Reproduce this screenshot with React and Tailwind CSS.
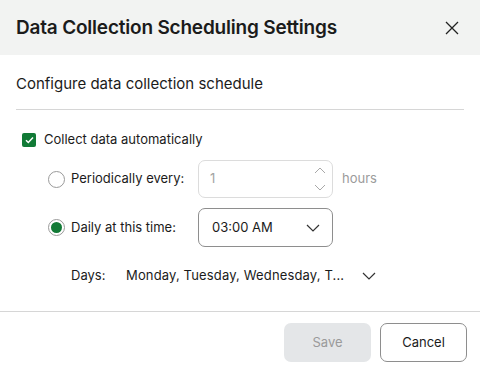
import React from 'react'

function Radio({ checked }) {
  return (
    <span className="w-[17px] h-[17px] rounded-full border border-[#9a9a9a] bg-white flex items-center justify-center">
      {checked && <span className="w-[11px] h-[11px] rounded-full bg-[#127a36]" />}
    </span>
  )
}

function Chevron({ className }) {
  return (
    <svg className={className} width="14" height="8" viewBox="0 0 14 8" fill="none">
      <path d="M1 1l6 6 6-6" stroke="#333" strokeWidth="1.2" />
    </svg>
  )
}

export default function App() {
  return (
    <div className="w-[480px] h-[375px] bg-white flex flex-col text-[#1b1b1b]" style={{ fontFamily: 'Inter, "Noto Sans", sans-serif' }}>
      <div className="h-[55px] bg-[#f2f3f2] flex items-center justify-between pl-4 pr-[21px]">
        <h1 className="text-[19px] font-semibold tracking-[-0.2px] pt-[1px]">Data Collection Scheduling Settings</h1>
        <svg width="14" height="14" viewBox="0 0 14 14" fill="none">
          <path d="M1 1l12 12M13 1L1 13" stroke="#222" strokeWidth="1.3" />
        </svg>
      </div>

      <div className="px-4 flex-1 flex flex-col">
        <div className="h-[55px] flex items-center border-b border-[#d6d6d6] pt-[5px]">
          <span className="text-[15px]">Configure data collection schedule</span>
        </div>

        <div className="mt-[21px] flex items-center gap-[8px] pl-[6px] h-[18px]">
          <span className="w-[14px] h-[14px] rounded-[2px] bg-[#117a36] flex items-center justify-center">
            <svg width="9" height="8" viewBox="0 0 9 8" fill="none">
              <path d="M1 4.2l2.3 2.3L8 1.5" stroke="#fff" strokeWidth="1.5" />
            </svg>
          </span>
          <span className="text-[13px]">Collect data automatically</span>
        </div>

        <div className="mt-[11px] flex items-center pl-[32px] h-[38px]">
          <Radio />
          <span className="ml-[6px] w-[127px] text-[13px]">Periodically every:</span>
          <div className="w-[135px] h-[38px] border border-[#dcdcdc] rounded-[7px] flex items-center justify-between pl-[11px] pr-[6px]">
            <span className="text-[13px] text-[#a3a3a3]">1</span>
            <div className="flex flex-col gap-[10px]">
              <svg width="12" height="7" viewBox="0 0 12 7" fill="none"><path d="M1 6l5-5 5 5" stroke="#a8a8a8" strokeWidth="1" /></svg>
              <svg width="12" height="7" viewBox="0 0 12 7" fill="none"><path d="M1 1l5 5 5-5" stroke="#a8a8a8" strokeWidth="1" /></svg>
            </div>
          </div>
          <span className="ml-[9px] text-[13px] text-[#9b9b9b]">hours</span>
        </div>

        <div className="mt-[10px] flex items-center pl-[32px] h-[39px]">
          <Radio checked />
          <span className="ml-[6px] w-[127px] text-[13px]">Daily at this time:</span>
          <div className="w-[135px] h-[39px] border border-[#8e8e8e] rounded-[7px] flex items-center justify-between pl-[13px] pr-[12px]">
            <span className="text-[13px]">03:00 AM</span>
            <Chevron />
          </div>
        </div>

        <div className="mt-[10px] flex items-center pl-[55px] h-[38px] text-[13px]">
          <span className="w-[55px]">Days:</span>
          <span className="tracking-[0.15px]">Monday, Tuesday, Wednesday, T...</span>
          <Chevron className="ml-[18px]" />
        </div>
      </div>

      <div className="border-t border-[#d6d6d6] h-[64px] flex items-start justify-end gap-[9px] pr-[13px] pt-[11px]">
        <button className="w-[87px] h-[39px] rounded-[7px] bg-[#e4e6e8] text-[13px] text-[#9a9a9a]">Save</button>
        <button className="w-[87px] h-[39px] rounded-[7px] border border-[#8e8e8e] bg-white text-[13px] text-[#1b1b1b]">Cancel</button>
      </div>
    </div>
  )
}
